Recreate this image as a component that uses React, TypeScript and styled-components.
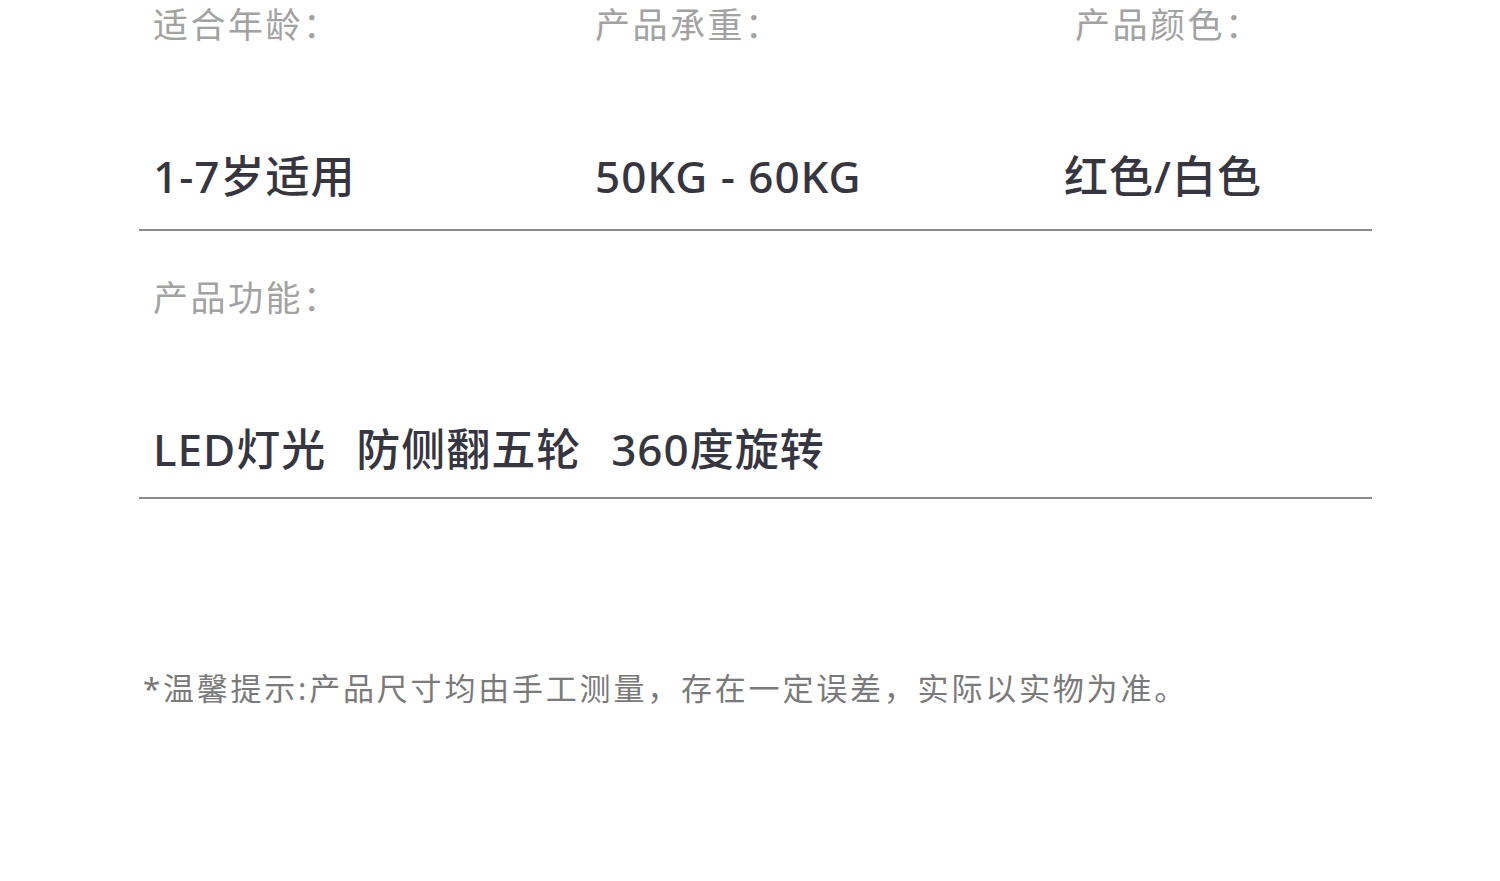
import React from "react";
import styled, { createGlobalStyle } from "styled-components";

const GlobalStyle = createGlobalStyle`
  html, body {
    margin: 0;
    padding: 0;
    background: #ffffff;
  }
  body {
    font-family: "Noto Sans", "Noto Sans CJK SC", sans-serif;
  }
`;

const specs = [
  { label: "适合年龄：", value: "1-7岁适用", indent: 0 },
  { label: "产品承重：", value: "50KG - 60KG", indent: 0 },
  { label: "产品颜色：", value: "红色/白色", indent: 11 },
];

const features = ["LED灯光", "防侧翻五轮", "360度旋转"];

const App: React.FC = () => {
  return (
    <>
      <GlobalStyle />
      <Page>
        <Section $bottom={23}>
          <SpecGrid>
            {specs.map((s) => (
              <SpecCell key={s.label}>
                <Label $indent={s.indent}>{s.label}</Label>
                <Value>{s.value}</Value>
              </SpecCell>
            ))}
          </SpecGrid>
        </Section>
        <Section $top={42} $bottom={18}>
          <SpecCell>
            <Label>产品功能：</Label>
            <FeatureRow>
              {features.map((f) => (
                <Value key={f}>{f}</Value>
              ))}
            </FeatureRow>
          </SpecCell>
        </Section>
        <Note>*温馨提示:产品尺寸均由手工测量，存在一定误差，实际以实物为准。</Note>
      </Page>
    </>
  );
};

export default App;

const Page = styled.div`
  width: 1500px;
  height: 881px;
  overflow: hidden;
  background: #ffffff;
  padding: 0 128px 0 139px;
  box-sizing: border-box;
`;

const Section = styled.section<{ $top?: number; $bottom?: number }>`
  padding: ${(p) => p.$top ?? 0}px 0 ${(p) => p.$bottom ?? 0}px 14px;
  border-bottom: 2px solid #8c8c8c;
`;

const SpecGrid = styled.div`
  display: grid;
  grid-template-columns: 442px 469px 1fr;
`;

const SpecCell = styled.div`
  display: flex;
  flex-direction: column;
  gap: 96px;
`;

const FeatureRow = styled.div`
  display: flex;
  gap: 30px;
`;

const Label = styled.div<{ $indent?: number }>`
  padding-left: ${(p) => p.$indent ?? 0}px;
  font-size: 35px;
  line-height: 50px;
  letter-spacing: 2.5px;
  color: #a2a2a2;
  font-weight: 400;
  white-space: nowrap;
`;

const Value = styled.div`
  font-size: 44px;
  line-height: 60px;
  letter-spacing: 1px;
  color: #363640;
  font-weight: 500;
  white-space: nowrap;
`;

const Note = styled.p`
  margin: 169px 0 0 4px;
  font-size: 31px;
  line-height: 40px;
  letter-spacing: 2.8px;
  color: #7a7a7a;
  white-space: nowrap;
`;
